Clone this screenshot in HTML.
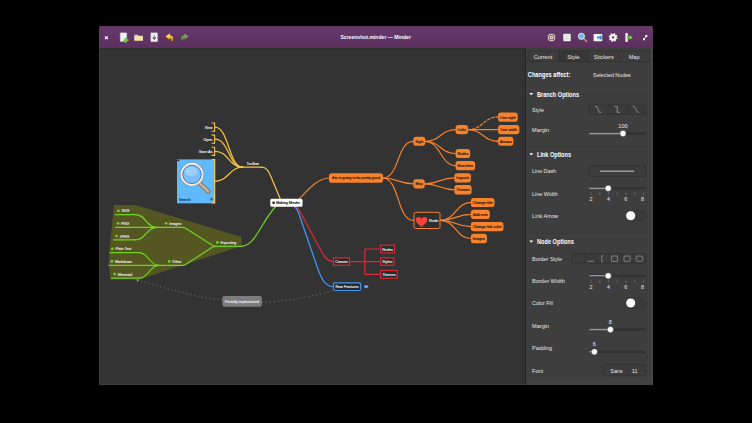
<!DOCTYPE html><html><head><meta charset="utf-8"><title>Minder</title>
<style>html,body{margin:0;padding:0;background:#000;width:752px;height:423px;overflow:hidden}svg{display:block;position:absolute;left:0;top:0}text{font-family:"Liberation Sans",sans-serif}</style></head><body>
<svg width="752" height="423" viewBox="0 0 752 423">
<rect width="752" height="423" fill="#000"/>
<rect x="99" y="26" width="554" height="359" rx="2" fill="#333333"/>
<rect x="99" y="40" width="554" height="345" fill="#333333"/>
<defs><linearGradient id="hg" x1="0" y1="0" x2="0" y2="1"><stop offset="0" stop-color="#66396a"/><stop offset="1" stop-color="#5a305e"/></linearGradient></defs>
<path d="M99 48.2V28a2 2 0 0 1 2-2H651a2 2 0 0 1 2 2V48.2Z" fill="url(#hg)"/>
<rect x="99" y="48" width="554" height="0.7" fill="#2a2a2a"/>
<polygon points="114,205 135.5,205 241.5,237 241.5,246 139,279.5 110.5,279.5 108.8,265 109.5,250" fill="#545721"/>
<circle cx="118.4" cy="210.8" r="1.4" fill="#72d21f"/>
<text x="121.5" y="212.2" font-size="3.95" fill="#e6e6e6" stroke="#e6e6e6" stroke-width="0.15" textLength="7.8" lengthAdjust="spacingAndGlyphs">SVG</text>
<path d="M115.4 214.6H135.4" stroke="#72d21f" stroke-width="1.25" fill="none" stroke-linecap="round"/>
<circle cx="118.0" cy="223.3" r="1.4" fill="#72d21f"/>
<text x="121.1" y="224.8" font-size="3.95" fill="#e6e6e6" stroke="#e6e6e6" stroke-width="0.15" textLength="8.0" lengthAdjust="spacingAndGlyphs">PNG</text>
<path d="M115.4 227.4H156.7" stroke="#72d21f" stroke-width="1.25" fill="none" stroke-linecap="round"/>
<circle cx="116.5" cy="236.1" r="1.4" fill="#72d21f"/>
<text x="119.6" y="237.5" font-size="3.95" fill="#e6e6e6" stroke="#e6e6e6" stroke-width="0.15" textLength="9.6" lengthAdjust="spacingAndGlyphs">JPEG</text>
<path d="M113.7 239.9H135.4" stroke="#72d21f" stroke-width="1.25" fill="none" stroke-linecap="round"/>
<circle cx="166.1" cy="223.3" r="1.4" fill="#72d21f"/>
<text x="169.2" y="224.8" font-size="3.95" fill="#e6e6e6" stroke="#e6e6e6" stroke-width="0.15" textLength="12.1" lengthAdjust="spacingAndGlyphs">Images</text>
<path d="M156.7 227.4H182.7" stroke="#72d21f" stroke-width="1.25" fill="none" stroke-linecap="round"/>
<circle cx="112.3" cy="248.9" r="1.4" fill="#72d21f"/>
<text x="115.4" y="250.3" font-size="3.95" fill="#e6e6e6" stroke="#e6e6e6" stroke-width="0.15" textLength="15.9" lengthAdjust="spacingAndGlyphs">Plain Text</text>
<path d="M110.0 252.6H139.0" stroke="#72d21f" stroke-width="1.25" fill="none" stroke-linecap="round"/>
<circle cx="111.8" cy="261.4" r="1.4" fill="#72d21f"/>
<text x="114.9" y="262.8" font-size="3.95" fill="#e6e6e6" stroke="#e6e6e6" stroke-width="0.15" textLength="17.0" lengthAdjust="spacingAndGlyphs">Markdown</text>
<path d="M109.0 265.4H159.0" stroke="#72d21f" stroke-width="1.25" fill="none" stroke-linecap="round"/>
<circle cx="114.6" cy="274.1" r="1.4" fill="#72d21f"/>
<text x="117.7" y="275.6" font-size="3.95" fill="#e6e6e6" stroke="#e6e6e6" stroke-width="0.15" textLength="14.4" lengthAdjust="spacingAndGlyphs">Mermaid</text>
<path d="M111.3 278.2H139.0" stroke="#72d21f" stroke-width="1.25" fill="none" stroke-linecap="round"/>
<circle cx="169.2" cy="261.4" r="1.4" fill="#72d21f"/>
<text x="172.3" y="262.8" font-size="3.95" fill="#e6e6e6" stroke="#e6e6e6" stroke-width="0.15" textLength="9.2" lengthAdjust="spacingAndGlyphs">Other</text>
<path d="M159.0 265.4H182.7" stroke="#72d21f" stroke-width="1.25" fill="none" stroke-linecap="round"/>
<circle cx="217.4" cy="242.5" r="1.4" fill="#72d21f"/>
<text x="220.5" y="243.9" font-size="3.95" fill="#e6e6e6" stroke="#e6e6e6" stroke-width="0.15" textLength="15.6" lengthAdjust="spacingAndGlyphs">Exporting</text>
<path d="M214.6 246.3H241.3" stroke="#72d21f" stroke-width="1.25" fill="none" stroke-linecap="round"/>
<path d="M135.4 214.6C146.1 214.6 146.1 227.4 156.7 227.4" fill="none" stroke="#72d21f" stroke-width="1.2" stroke-linecap="round"/>
<path d="M135.4 239.9C146.1 239.9 146.1 227.4 156.7 227.4" fill="none" stroke="#72d21f" stroke-width="1.2" stroke-linecap="round"/>
<path d="M139.0 252.6C149.0 252.6 149.0 265.4 159.0 265.4" fill="none" stroke="#72d21f" stroke-width="1.2" stroke-linecap="round"/>
<path d="M139.0 278.2C149.0 278.2 149.0 265.4 159.0 265.4" fill="none" stroke="#72d21f" stroke-width="1.2" stroke-linecap="round"/>
<path d="M182.7 227.4C184.5 227.4 184.5 227.6 186 228.6L211.5 244.8C213 245.8 213.4 246.3 215.5 246.3" fill="none" stroke="#72d21f" stroke-width="1.25"/>
<path d="M182.7 265.4C184.5 265.4 184.5 265.2 186 264.2L211.5 247.8C213 246.8 213.4 246.3 215.5 246.3" fill="none" stroke="#72d21f" stroke-width="1.25"/>
<path d="M241.3 246.3C255 246.3 260 224 276 206" fill="none" stroke="#72d21f" stroke-width="1.25"/>
<text x="212.4" y="128.5" font-size="3.95" fill="#e6e6e6" stroke="#e6e6e6" stroke-width="0.15" text-anchor="end" textLength="7.4" lengthAdjust="spacingAndGlyphs">New</text>
<path d="M211.6 123.0H214.6V131.2H211.6" fill="none" stroke="#f9c440" stroke-width="1.1"/>
<path d="M215.0 127.1C228.8 127.1 228.8 167.2 242.5 167.2" fill="none" stroke="#f9c440" stroke-width="1.2" stroke-linecap="round"/>
<text x="212.4" y="140.6" font-size="3.95" fill="#e6e6e6" stroke="#e6e6e6" stroke-width="0.15" text-anchor="end" textLength="9.0" lengthAdjust="spacingAndGlyphs">Open</text>
<path d="M211.6 135.1H214.6V143.3H211.6" fill="none" stroke="#f9c440" stroke-width="1.1"/>
<path d="M215.0 139.2C228.8 139.2 228.8 167.2 242.5 167.2" fill="none" stroke="#f9c440" stroke-width="1.2" stroke-linecap="round"/>
<text x="212.4" y="152.8" font-size="3.95" fill="#e6e6e6" stroke="#e6e6e6" stroke-width="0.15" text-anchor="end" textLength="13.6" lengthAdjust="spacingAndGlyphs">Save As</text>
<path d="M211.6 147.2H214.6V155.4H211.6" fill="none" stroke="#f9c440" stroke-width="1.1"/>
<path d="M215.0 151.3C228.8 151.3 228.8 167.2 242.5 167.2" fill="none" stroke="#f9c440" stroke-width="1.2" stroke-linecap="round"/>
<rect x="177" y="159.4" width="38" height="43.9" fill="#5fb9fa"/>
<path d="M211.8 159.7H214.7V202.9H211.8" fill="none" stroke="#f9c440" stroke-width="1.2"/>
<rect x="177.2" y="159.8" width="2" height="1.3" fill="#1c1c1c"/>
<path d="M215.0 181.3C228.8 181.3 228.8 167.2 242.5 167.2" fill="none" stroke="#f9c440" stroke-width="1.2" stroke-linecap="round"/>
<g>
<path d="M200 183.4L208.4 191.6" stroke="#7d6448" stroke-width="4.2" stroke-linecap="round"/>
<path d="M200 183.4L208.4 191.6" stroke="#cdb092" stroke-width="2.8" stroke-linecap="round"/>
<circle cx="192" cy="174.4" r="10.5" fill="#7cbff8" stroke="#8a7862" stroke-width="2.9"/>
<circle cx="192" cy="174.4" r="10.5" fill="none" stroke="#f1ebe3" stroke-width="2.1"/>
<circle cx="192" cy="174.4" r="9.2" fill="none" stroke="#2f7fe6" stroke-width="0.8"/>
<ellipse cx="191" cy="171.5" rx="6.5" ry="4.6" fill="#b4dcff" opacity="0.55"/>
</g>
<text x="178.9" y="200.5" font-size="3.95" fill="#16324f" stroke="#16324f" stroke-width="0.15" textLength="11.6" lengthAdjust="spacingAndGlyphs">Search</text>
<rect x="210.6" y="197.9" width="1.8" height="2.4" fill="#2a4a6a"/>
<path d="M242.0 167.2H261.6" stroke="#f9c440" stroke-width="1.2" fill="none" stroke-linecap="round"/>
<text x="252.8" y="165.3" font-size="3.95" fill="#e6e6e6" stroke="#e6e6e6" stroke-width="0.15" text-anchor="middle" textLength="12.6" lengthAdjust="spacingAndGlyphs">Toolbar</text>
<path d="M261.3 167.2C267.5 167.2 269 172.5 271.5 178L280.9 200.5" fill="none" stroke="#f9c440" stroke-width="1.2"/>
<path d="M295.8 206C297.5 208 300 211.5 302.3 215.7L318 245C322 252.5 326 261.6 333 261.6" fill="none" stroke="#dc2a35" stroke-width="1.3"/>
<path d="M294.3 206C296 208 297.3 209.5 298.6 213L315.8 262.9C320 275.5 324 286.6 333 286.6" fill="none" stroke="#3f97f6" stroke-width="1.3"/>
<path d="M298.5 199.8C309 188.5 318 178 329.4 178" fill="none" stroke="#f8822c" stroke-width="1.2"/>
<rect x="270.3" y="198.7" width="32.2" height="8" rx="1.5" fill="#ffffff"/>
<circle cx="273.6" cy="202.7" r="1.3" fill="#111"/>
<text x="276" y="204.3" font-size="3.95" fill="#1a1a1a" stroke="#1a1a1a" stroke-width="0.18" textLength="24" lengthAdjust="spacingAndGlyphs">Making Minder</text>
<rect x="329.0" y="173.3" width="54.0" height="9.4" rx="2.8" fill="#f8822c"/>
<text x="356.0" y="179.4" font-size="3.95" text-anchor="middle" fill="#1e1a17" stroke="#1e1a17" stroke-width="0.18" textLength="48.2" lengthAdjust="spacingAndGlyphs">this is going to be pretty good</text>
<path d="M382.8 178.0C399.7 178.0 396.6 141.3 413.5 141.3" fill="none" stroke="#f8822c" stroke-width="1.2" stroke-linecap="round"/>
<path d="M382.8 178.0C398.1 178.0 398.1 183.8 413.5 183.8" fill="none" stroke="#f8822c" stroke-width="1.2" stroke-linecap="round"/>
<path d="M382.8 178.0C399.7 178.0 396.6 220.3 413.5 220.3" fill="none" stroke="#f8822c" stroke-width="1.2" stroke-linecap="round"/>
<path d="M425.1 141.3C440.5 141.3 440.5 129.6 455.8 129.6" fill="none" stroke="#f8822c" stroke-width="1.2" stroke-linecap="round"/>
<path d="M425.1 141.3C440.5 141.3 440.5 153.5 455.8 153.5" fill="none" stroke="#f8822c" stroke-width="1.2" stroke-linecap="round"/>
<path d="M425.1 141.3C440.5 141.3 440.5 165.6 455.8 165.6" fill="none" stroke="#f8822c" stroke-width="1.2" stroke-linecap="round"/>
<path d="M467.8 129.6C483.1 129.6 483.1 117.0 498.3 117.0" fill="none" stroke="#f8822c" stroke-width="1.2" stroke-dasharray="2.6 1.9" stroke-linecap="round"/>
<path d="M467.8 129.6C483.1 129.6 483.1 129.6 498.3 129.6" fill="none" stroke="#f8822c" stroke-width="1.2" stroke-linecap="round"/>
<path d="M467.8 129.6C483.1 129.6 483.1 141.3 498.3 141.3" fill="none" stroke="#f8822c" stroke-width="1.2" stroke-linecap="round"/>
<path d="M496.3 140.2L498.3 141.3L496.3 142.4" fill="none" stroke="#f8822c" stroke-width="0.7"/>
<path d="M424.6 183.8C439.6 183.8 439.6 177.9 454.6 177.9" fill="none" stroke="#f8822c" stroke-width="1.2" stroke-linecap="round"/>
<path d="M424.6 183.8C439.6 183.8 439.6 189.8 454.6 189.8" fill="none" stroke="#f8822c" stroke-width="1.2" stroke-linecap="round"/>
<path d="M440.4 220.3C455.8 220.3 455.8 202.4 471.1 202.4" fill="none" stroke="#f8822c" stroke-width="1.2" stroke-linecap="round"/>
<path d="M440.4 220.3C455.8 220.3 455.8 214.4 471.1 214.4" fill="none" stroke="#f8822c" stroke-width="1.2" stroke-linecap="round"/>
<path d="M440.4 220.3C455.8 220.3 455.8 226.6 471.1 226.6" fill="none" stroke="#f8822c" stroke-width="1.2" stroke-linecap="round"/>
<path d="M440.4 220.3C455.8 220.3 455.8 238.5 471.1 238.5" fill="none" stroke="#f8822c" stroke-width="1.2" stroke-linecap="round"/>
<rect x="413.3" y="136.7" width="12.0" height="9.1" rx="2.8" fill="#f8822c"/>
<text x="419.3" y="142.7" font-size="3.95" text-anchor="middle" fill="#1e1a17" stroke="#1e1a17" stroke-width="0.18" textLength="8.2" lengthAdjust="spacingAndGlyphs">Style</text>
<rect x="455.6" y="124.9" width="12.4" height="9.4" rx="2.8" fill="#f8822c"/>
<text x="461.8" y="131.0" font-size="3.95" text-anchor="middle" fill="#1e1a17" stroke="#1e1a17" stroke-width="0.18" textLength="8.6" lengthAdjust="spacingAndGlyphs">Links</text>
<rect x="498.1" y="112.4" width="19.6" height="9.3" rx="2.8" fill="#f8822c"/>
<text x="507.9" y="118.5" font-size="3.95" text-anchor="middle" fill="#1e1a17" stroke="#1e1a17" stroke-width="0.18" textLength="15.6" lengthAdjust="spacingAndGlyphs">Line style</text>
<rect x="498.1" y="124.9" width="21.2" height="9.4" rx="2.8" fill="#f8822c"/>
<text x="508.7" y="131.0" font-size="3.95" text-anchor="middle" fill="#1e1a17" stroke="#1e1a17" stroke-width="0.18" textLength="16.6" lengthAdjust="spacingAndGlyphs">Line width</text>
<rect x="498.1" y="136.7" width="15.3" height="9.1" rx="2.8" fill="#f8822c"/>
<text x="505.8" y="142.7" font-size="3.95" text-anchor="middle" fill="#1e1a17" stroke="#1e1a17" stroke-width="0.18" textLength="11.5" lengthAdjust="spacingAndGlyphs">Arrows</text>
<rect x="455.6" y="149.0" width="14.6" height="9.1" rx="2.8" fill="#f8822c"/>
<text x="462.9" y="155.0" font-size="3.95" text-anchor="middle" fill="#1e1a17" stroke="#1e1a17" stroke-width="0.18" textLength="10.7" lengthAdjust="spacingAndGlyphs">Nodes</text>
<rect x="455.6" y="161.0" width="19.5" height="9.2" rx="2.8" fill="#f8822c"/>
<text x="465.4" y="167.0" font-size="3.95" text-anchor="middle" fill="#1e1a17" stroke="#1e1a17" stroke-width="0.18" textLength="15.6" lengthAdjust="spacingAndGlyphs">Branches</text>
<rect x="413.3" y="179.2" width="11.5" height="9.2" rx="2.8" fill="#f8822c"/>
<text x="419.1" y="185.2" font-size="3.95" text-anchor="middle" fill="#1e1a17" stroke="#1e1a17" stroke-width="0.18" textLength="7.2" lengthAdjust="spacingAndGlyphs">Map</text>
<rect x="454.4" y="173.3" width="16.5" height="9.2" rx="2.8" fill="#f8822c"/>
<text x="462.6" y="179.3" font-size="3.95" text-anchor="middle" fill="#1e1a17" stroke="#1e1a17" stroke-width="0.18" textLength="12.9" lengthAdjust="spacingAndGlyphs">Layouts</text>
<rect x="454.4" y="185.1" width="17.2" height="9.4" rx="2.8" fill="#f8822c"/>
<text x="463.0" y="191.2" font-size="3.95" text-anchor="middle" fill="#1e1a17" stroke="#1e1a17" stroke-width="0.18" textLength="13.3" lengthAdjust="spacingAndGlyphs">Themes</text>
<rect x="470.9" y="197.9" width="23.6" height="9.1" rx="2.8" fill="#f8822c"/>
<text x="482.7" y="203.9" font-size="3.95" text-anchor="middle" fill="#1e1a17" stroke="#1e1a17" stroke-width="0.18" textLength="19.7" lengthAdjust="spacingAndGlyphs">Change title</text>
<rect x="470.9" y="209.7" width="18.9" height="9.4" rx="2.8" fill="#f8822c"/>
<text x="480.4" y="215.8" font-size="3.95" text-anchor="middle" fill="#1e1a17" stroke="#1e1a17" stroke-width="0.18" textLength="14.8" lengthAdjust="spacingAndGlyphs">Add note</text>
<rect x="470.9" y="222.0" width="32.6" height="9.3" rx="2.8" fill="#f8822c"/>
<text x="487.2" y="228.1" font-size="3.95" text-anchor="middle" fill="#1e1a17" stroke="#1e1a17" stroke-width="0.18" textLength="28.5" lengthAdjust="spacingAndGlyphs">Change link color</text>
<rect x="470.9" y="233.8" width="16.0" height="9.4" rx="2.8" fill="#f8822c"/>
<text x="478.9" y="239.9" font-size="3.95" text-anchor="middle" fill="#1e1a17" stroke="#1e1a17" stroke-width="0.18" textLength="12.1" lengthAdjust="spacingAndGlyphs">Images</text>
<rect x="414" y="212.3" width="26" height="16.2" rx="1.8" fill="#2f2f2f" stroke="#f8822c" stroke-width="1"/>
<path d="M421.5 227C417.4 223.6 415.6 221.8 415.6 219.8C415.6 218.1 416.9 217 418.4 217C419.7 217 420.8 217.7 421.5 218.9C422.2 217.7 423.3 217 424.6 217C426.1 217 427.4 218.1 427.4 219.8C427.4 221.8 425.6 223.6 421.5 227Z" fill="#f3453a"/>
<text x="433.8" y="222.1" font-size="3.95" fill="#e6e6e6" stroke="#e6e6e6" stroke-width="0.15" text-anchor="middle" textLength="9.4" lengthAdjust="spacingAndGlyphs">Node</text>
<path d="M350 261.6H380.2M364.8 249V274.3M364.8 249H380.2M364.8 274.3H380.2" fill="none" stroke="#dc2a35" stroke-width="1.2" stroke-linejoin="round"/>
<rect x="333.5" y="257.9" width="16.0" height="7.3" rx="0" fill="#292929" stroke="#dc2a35" stroke-width="1.2"/>
<text x="341.5" y="263.0" font-size="3.95" fill="#e6e6e6" stroke="#e6e6e6" stroke-width="0.15" text-anchor="middle" textLength="12.5" lengthAdjust="spacingAndGlyphs">Canvas</text>
<rect x="380.7" y="245.2" width="13.9" height="7.7" rx="0" fill="#292929" stroke="#dc2a35" stroke-width="1.2"/>
<text x="387.6" y="250.6" font-size="3.95" fill="#e6e6e6" stroke="#e6e6e6" stroke-width="0.15" text-anchor="middle" textLength="10.7" lengthAdjust="spacingAndGlyphs">Nodes</text>
<rect x="380.7" y="257.9" width="13.2" height="7.3" rx="0" fill="#292929" stroke="#dc2a35" stroke-width="1.2"/>
<text x="387.3" y="263.0" font-size="3.95" fill="#e6e6e6" stroke="#e6e6e6" stroke-width="0.15" text-anchor="middle" textLength="10.1" lengthAdjust="spacingAndGlyphs">Styles</text>
<rect x="380.7" y="270.5" width="16.5" height="7.7" rx="0" fill="#292929" stroke="#dc2a35" stroke-width="1.2"/>
<text x="388.9" y="275.9" font-size="3.95" fill="#e6e6e6" stroke="#e6e6e6" stroke-width="0.15" text-anchor="middle" textLength="13.3" lengthAdjust="spacingAndGlyphs">Themes</text>
<rect x="333.5" y="282.8" width="27.1" height="7.7" rx="1.5" fill="#292929" stroke="#3f97f6" stroke-width="1.2"/>
<text x="347.1" y="288.1" font-size="3.95" fill="#e6e6e6" stroke="#e6e6e6" stroke-width="0.15" text-anchor="middle" textLength="23.0" lengthAdjust="spacingAndGlyphs">New Features</text>
<rect x="364.2" y="285.3" width="4" height="2.6" rx="0.4" fill="#3f97f6"/>
<rect x="365" y="286" width="2.4" height="0.9" fill="#7cc0ff"/>
<path d="M137.5 280C170 290 200 298 222.4 300" fill="none" stroke="#858585" stroke-width="0.8" stroke-dasharray="1 2.9"/>
<path d="M262 302.3C290 301 315 296 333 290.6" fill="none" stroke="#858585" stroke-width="0.8" stroke-dasharray="1 2.9"/>
<path d="M136.3 279.4L139.4 279.6L137.6 282Z" fill="#9a9a9a"/>
<rect x="222.4" y="296" width="39.5" height="10.8" rx="2.2" fill="#7d7d7d"/>
<text x="242.1" y="302.9" font-size="3.95" fill="#e6e6e6" stroke="#e6e6e6" stroke-width="0.15" text-anchor="middle" textLength="34" lengthAdjust="spacingAndGlyphs">Partially implemented</text>
<rect x="525" y="48" width="128" height="337" fill="#3e3e3e"/>
<rect x="525" y="48" width="1" height="337" fill="#242424"/>
<rect x="528.5" y="377.5" width="122.3" height="7.5" fill="#414141"/>
<rect x="650.9" y="48" width="2.1" height="337" fill="#454545"/>
<rect x="528.3" y="51.1" width="121.2" height="10.6" rx="1" fill="#3d3d3d" stroke="#2f2f2f" stroke-width="0.6"/>
<rect x="558.4" y="51.1" width="30.3" height="10.6" fill="#373737" stroke="#2f2f2f" stroke-width="0.6"/>
<path d="M618.9 51.1V61.7" stroke="#2f2f2f" stroke-width="0.6"/>
<text x="543.0" y="59.0" font-size="5.6" text-anchor="middle" fill="#e8e8e8">Current</text>
<text x="573.4" y="59.0" font-size="5.6" text-anchor="middle" fill="#e8e8e8">Style</text>
<text x="603.8" y="59.0" font-size="5.6" text-anchor="middle" fill="#e8e8e8">Stickers</text>
<text x="634.1" y="59.0" font-size="5.6" text-anchor="middle" fill="#e8e8e8">Map</text>
<text x="527.8" y="76.8" font-size="6.5" text-anchor="start" fill="#fff" font-weight="bold" textLength="42.5" lengthAdjust="spacingAndGlyphs">Changes affect:</text>
<text x="593.1" y="76.8" font-size="5.6" text-anchor="start" fill="#e8e8e8" textLength="37.7" lengthAdjust="spacingAndGlyphs">Selected Nodes</text>
<rect x="526" y="89.3" width="124" height="0.6" fill="#424242"/>
<path d="M529.2 93.0H533.4L531.3 95.3Z" fill="#f4f4f4"/>
<text x="537" y="96.6" font-size="6.5" text-anchor="start" fill="#fff" font-weight="bold" textLength="42" lengthAdjust="spacingAndGlyphs">Branch Options</text>
<path d="M529.2 153.2H533.4L531.3 155.5Z" fill="#f4f4f4"/>
<text x="537" y="156.8" font-size="6.5" text-anchor="start" fill="#fff" font-weight="bold" textLength="34" lengthAdjust="spacingAndGlyphs">Link Options</text>
<path d="M529.2 240.5H533.4L531.3 242.8Z" fill="#f4f4f4"/>
<text x="537" y="244.1" font-size="6.5" text-anchor="start" fill="#fff" font-weight="bold" textLength="36.8" lengthAdjust="spacingAndGlyphs">Node Options</text>
<rect x="526" y="145.6" width="124" height="0.6" fill="#383838"/>
<rect x="526" y="233.4" width="124" height="0.6" fill="#383838"/>
<text x="532.1" y="111.7" font-size="5.5" text-anchor="start" fill="#e8e8e8" textLength="11.8" lengthAdjust="spacingAndGlyphs">Style</text>
<text x="532.1" y="132.2" font-size="5.5" text-anchor="start" fill="#e8e8e8" textLength="17.0" lengthAdjust="spacingAndGlyphs">Margin</text>
<text x="532.1" y="173.2" font-size="5.5" text-anchor="start" fill="#e8e8e8" textLength="23.9" lengthAdjust="spacingAndGlyphs">Line Dash</text>
<text x="532.1" y="195.8" font-size="5.5" text-anchor="start" fill="#e8e8e8" textLength="25.6" lengthAdjust="spacingAndGlyphs">Line Width</text>
<text x="532.1" y="218.0" font-size="5.5" text-anchor="start" fill="#e8e8e8" textLength="25.9" lengthAdjust="spacingAndGlyphs">Link Arrow</text>
<text x="532.1" y="260.5" font-size="5.5" text-anchor="start" fill="#e8e8e8" textLength="29.9" lengthAdjust="spacingAndGlyphs">Border Style</text>
<text x="532.1" y="283.3" font-size="5.5" text-anchor="start" fill="#e8e8e8" textLength="32.9" lengthAdjust="spacingAndGlyphs">Border Width</text>
<text x="532.1" y="305.3" font-size="5.5" text-anchor="start" fill="#e8e8e8" textLength="20.8" lengthAdjust="spacingAndGlyphs">Color Fill</text>
<text x="532.1" y="328.2" font-size="5.5" text-anchor="start" fill="#e8e8e8" textLength="17.0" lengthAdjust="spacingAndGlyphs">Margin</text>
<text x="532.1" y="350.3" font-size="5.5" text-anchor="start" fill="#e8e8e8" textLength="19.9" lengthAdjust="spacingAndGlyphs">Padding</text>
<text x="532.1" y="372.8" font-size="5.5" text-anchor="start" fill="#e8e8e8" textLength="10.9" lengthAdjust="spacingAndGlyphs">Font</text>
<rect x="589.2" y="105" width="56.7" height="9.2" rx="1" fill="#3c3c3c" stroke="#2f2f2f" stroke-width="0.6"/>
<path d="M607.8 105V114.2M626.5 105V114.2" stroke="#2f2f2f" stroke-width="0.6"/>
<rect x="626.5" y="105.3" width="19.1" height="8.6" fill="#393939"/>
<path d="M594.9 106.4H596.9L599.2 112.3H601.3" fill="none" stroke="#a6a6a6" stroke-width="0.75"/>
<path d="M614.5 106.4H617.2V112.3H620" fill="none" stroke="#a6a6a6" stroke-width="0.75"/>
<path d="M632.6 106.4C637.3 106.4 634.5 112.3 639.2 112.3" fill="none" stroke="#a6a6a6" stroke-width="0.75"/>
<rect x="589" y="132.6" width="56.3" height="1.8" rx="0.9" fill="#363636" stroke="#2b2b2b" stroke-width="0.45"/>
<rect x="589" y="132.7" width="34.0" height="1.7" rx="0.85" fill="#a6a6ad" stroke="#2e2e2e" stroke-width="0.35"/>
<circle cx="623" cy="133.5" r="3.15" fill="#fcfcfc" stroke="#262626" stroke-width="0.5"/>
<text x="623" y="128.2" font-size="5.6" text-anchor="middle" fill="#e8e8e8">100</text>
<rect x="588.8" y="165.6" width="57.1" height="10.8" rx="1" fill="#3c3c3c" stroke="#2f2f2f" stroke-width="0.6"/>
<path d="M600 171.2H634.2" stroke="#9c9c9c" stroke-width="1.4"/>
<rect x="589" y="187.4" width="56.3" height="1.8" rx="0.9" fill="#363636" stroke="#2b2b2b" stroke-width="0.45"/>
<rect x="589" y="187.5" width="19.2" height="1.7" rx="0.85" fill="#a6a6ad" stroke="#2e2e2e" stroke-width="0.35"/>
<circle cx="608.2" cy="188.3" r="3.15" fill="#fcfcfc" stroke="#262626" stroke-width="0.5"/>
<path d="M591.1 192.1V195.2" stroke="#7a7a7a" stroke-width="0.6"/>
<path d="M599.8 192.1V195.2" stroke="#7a7a7a" stroke-width="0.6"/>
<path d="M608.5 192.1V195.2" stroke="#7a7a7a" stroke-width="0.6"/>
<path d="M617.2 192.1V195.2" stroke="#7a7a7a" stroke-width="0.6"/>
<path d="M625.9 192.1V195.2" stroke="#7a7a7a" stroke-width="0.6"/>
<path d="M634.6 192.1V195.2" stroke="#7a7a7a" stroke-width="0.6"/>
<path d="M643.3 192.1V195.2" stroke="#7a7a7a" stroke-width="0.6"/>
<text x="591.1" y="200.9" font-size="5.4" text-anchor="middle" fill="#e8e8e8">2</text>
<text x="608.4" y="200.9" font-size="5.4" text-anchor="middle" fill="#e8e8e8">4</text>
<text x="625.8" y="200.9" font-size="5.4" text-anchor="middle" fill="#e8e8e8">6</text>
<text x="642.6" y="200.9" font-size="5.4" text-anchor="middle" fill="#e8e8e8">8</text>
<rect x="625.4" y="210.5" width="20.5" height="10.4" rx="5.2" fill="#3a3a3a" stroke="#313131" stroke-width="0.6"/>
<circle cx="630.7" cy="215.7" r="5.0" fill="#fcfcfc" stroke="#242424" stroke-width="0.8"/>
<rect x="572.4" y="253.6" width="73.5" height="9.6" rx="1" fill="#3c3c3c" stroke="#2f2f2f" stroke-width="0.6"/>
<path d="M584.6 253.6V263.2M596.8 253.6V263.2M609 253.6V263.2M621.3 253.6V263.2M633.5 253.6V263.2" stroke="#2f2f2f" stroke-width="0.6"/>
<rect x="584.9" y="253.9" width="11.7" height="9" fill="#393939"/>
<path d="M587.6 261.2H594" stroke="#989898" stroke-width="0.8"/>
<path d="M603.2 255.7H601.7V261.4H603.2" fill="none" stroke="#989898" stroke-width="0.7"/>
<rect x="611.7" y="256" width="5.6" height="5.4" fill="none" stroke="#989898" stroke-width="0.7"/>
<rect x="624" y="256" width="6.2" height="5.4" rx="1" fill="none" stroke="#989898" stroke-width="0.7"/>
<rect x="636.2" y="256" width="6.5" height="5.4" rx="2" fill="none" stroke="#989898" stroke-width="0.7"/>
<rect x="589" y="274.9" width="56.3" height="1.8" rx="0.9" fill="#363636" stroke="#2b2b2b" stroke-width="0.45"/>
<rect x="589" y="274.9" width="19.2" height="1.7" rx="0.85" fill="#a6a6ad" stroke="#2e2e2e" stroke-width="0.35"/>
<circle cx="608.2" cy="275.8" r="3.15" fill="#fcfcfc" stroke="#262626" stroke-width="0.5"/>
<path d="M591.1 279.6V282.7" stroke="#7a7a7a" stroke-width="0.6"/>
<path d="M599.8 279.6V282.7" stroke="#7a7a7a" stroke-width="0.6"/>
<path d="M608.5 279.6V282.7" stroke="#7a7a7a" stroke-width="0.6"/>
<path d="M617.2 279.6V282.7" stroke="#7a7a7a" stroke-width="0.6"/>
<path d="M625.9 279.6V282.7" stroke="#7a7a7a" stroke-width="0.6"/>
<path d="M634.6 279.6V282.7" stroke="#7a7a7a" stroke-width="0.6"/>
<path d="M643.3 279.6V282.7" stroke="#7a7a7a" stroke-width="0.6"/>
<text x="591.1" y="288.7" font-size="5.4" text-anchor="middle" fill="#e8e8e8">2</text>
<text x="608.4" y="288.7" font-size="5.4" text-anchor="middle" fill="#e8e8e8">4</text>
<text x="625.8" y="288.7" font-size="5.4" text-anchor="middle" fill="#e8e8e8">6</text>
<text x="642.6" y="288.7" font-size="5.4" text-anchor="middle" fill="#e8e8e8">8</text>
<rect x="625.4" y="297.8" width="20.5" height="10.4" rx="5.2" fill="#3a3a3a" stroke="#313131" stroke-width="0.6"/>
<circle cx="630.7" cy="303.0" r="5.0" fill="#fcfcfc" stroke="#242424" stroke-width="0.8"/>
<rect x="589" y="328.7" width="56.3" height="1.8" rx="0.9" fill="#363636" stroke="#2b2b2b" stroke-width="0.45"/>
<rect x="589" y="328.8" width="21.4" height="1.7" rx="0.85" fill="#a6a6ad" stroke="#2e2e2e" stroke-width="0.35"/>
<circle cx="610.4" cy="329.6" r="3.15" fill="#fcfcfc" stroke="#262626" stroke-width="0.5"/>
<text x="610.4" y="324.4" font-size="5.6" text-anchor="middle" fill="#e8e8e8">8</text>
<rect x="589" y="350.9" width="56.3" height="1.8" rx="0.9" fill="#363636" stroke="#2b2b2b" stroke-width="0.45"/>
<rect x="589" y="350.9" width="5.4" height="1.7" rx="0.85" fill="#a6a6ad" stroke="#2e2e2e" stroke-width="0.35"/>
<circle cx="594.4" cy="351.8" r="3.15" fill="#fcfcfc" stroke="#262626" stroke-width="0.5"/>
<text x="594.4" y="346.3" font-size="5.6" text-anchor="middle" fill="#e8e8e8">6</text>
<rect x="603.2" y="364.7" width="42.7" height="10.9" rx="1" fill="#3c3c3c" stroke="#2f2f2f" stroke-width="0.6"/>
<path d="M626.3 365V375.4" stroke="#333" stroke-width="0.5"/>
<text x="616.5" y="372.5" font-size="5.4" text-anchor="middle" fill="#e8e8e8">Sans</text>
<text x="634.6" y="372.5" font-size="5.4" text-anchor="middle" fill="#e8e8e8">11</text>
<path d="M99.4 48.5V384.6H652.8" fill="none" stroke="#474747" stroke-width="0.6"/>
<text x="340.4" y="39.1" font-size="5.4" text-anchor="start" fill="#fff" font-weight="bold" textLength="70.5" lengthAdjust="spacingAndGlyphs">Screenshot.minder — Minder</text>
<path d="M105 36.3L107.8 39.1M107.8 36.3L105 39.1" stroke="#fff" stroke-width="1.15"/>
<rect x="120.2" y="32.8" width="6.6" height="8.8" rx="0.6" fill="#f2f2f2" stroke="#bdbdbd" stroke-width="0.4"/>
<path d="M125.9 38.3V42.1M124 40.2H127.8" stroke="#62d32e" stroke-width="1.7" stroke-linecap="round"/>
<path d="M134.4 34.8H137.6L138.4 35.8H142.9V40.6H134.4Z" fill="#e9d29a"/>
<rect x="134.4" y="36.4" width="8.5" height="4.2" fill="#f6e3b0"/>
<rect x="150.8" y="32.8" width="6.8" height="9" rx="0.6" fill="#f2f2f2" stroke="#bdbdbd" stroke-width="0.4"/>
<path d="M154.3 34.8V38.2M152.7 37.5L154.3 39.8L155.9 37.5Z" stroke="#6e6e7a" stroke-width="0.9" fill="#6e6e7a"/>
<defs><linearGradient id="ug" x1="0" y1="0" x2="1" y2="1"><stop offset="0.3" stop-color="#ffdf4a"/><stop offset="1" stop-color="#d88a10"/></linearGradient><linearGradient id="rg" x1="0" y1="0" x2="0" y2="1"><stop offset="0" stop-color="#8ab560"/><stop offset="1" stop-color="#5c8a38"/></linearGradient></defs>
<path d="M165.6 36.5L169.7 33.2V35.3C172.8 35.3 174 37.8 172.5 41L171.1 40.9C171.6 38.9 171 38 169.7 38V39.8Z" fill="url(#ug)"/>
<path d="M188.5 36.6L184.5 33.6V35.5C181.6 35.5 180.5 37.8 181.8 40.5L183 40.4C182.6 38.7 183.2 38 184.5 38V39.7Z" fill="url(#rg)"/>
<circle cx="551.5" cy="37.5" r="4.2" fill="#f0f0f0" stroke="#2f5567" stroke-width="1"/>
<circle cx="551.5" cy="37.5" r="2.9" fill="#e0403a"/>
<circle cx="551.5" cy="37.5" r="1.7" fill="#f4f4f4"/>
<circle cx="551.5" cy="37.5" r="0.8" fill="#e0403a"/>
<rect x="563.3" y="33.8" width="7.4" height="7.4" rx="0.8" fill="#f0f0f0"/>
<path d="M564.4 36H569.6M564.4 39H569.6M567 34.6V40.4" stroke="#cfcfcf" stroke-width="0.5"/>
<path d="M583.6 38.6L586.6 41.4" stroke="#c9a36a" stroke-width="1.4" stroke-linecap="round"/>
<circle cx="581.4" cy="36.3" r="3.1" fill="#6cbaf6" stroke="#ececec" stroke-width="0.9"/>
<rect x="593.6" y="34" width="8.6" height="7.2" rx="0.5" fill="#f2f2f2"/>
<path d="M597 36.6H599.8V35L603 37.6L599.8 40.2V38.6H597Z" fill="#3592e6"/>
<circle cx="613.1" cy="37.5" r="2.3" fill="none" stroke="#f4f4f4" stroke-width="2.3"/>
<circle cx="613.1" cy="37.5" r="3.7" fill="none" stroke="#f4f4f4" stroke-width="1.4" stroke-dasharray="1.5 1.4"/>
<rect x="625.4" y="33" width="2.4" height="9" rx="0.4" fill="#f4f4f4"/>
<path d="M626.8 36.5H629.6V35L632.7 37.5L629.6 40V38.5H626.8Z" fill="#6fd22b"/>
<path d="M644 39L646.4 36.6" stroke="#fff" stroke-width="0.9"/>
<rect x="645.3" y="35" width="2" height="2" fill="#fff"/><rect x="643" y="38.2" width="2" height="2" fill="#fff"/>
</svg></body></html>
